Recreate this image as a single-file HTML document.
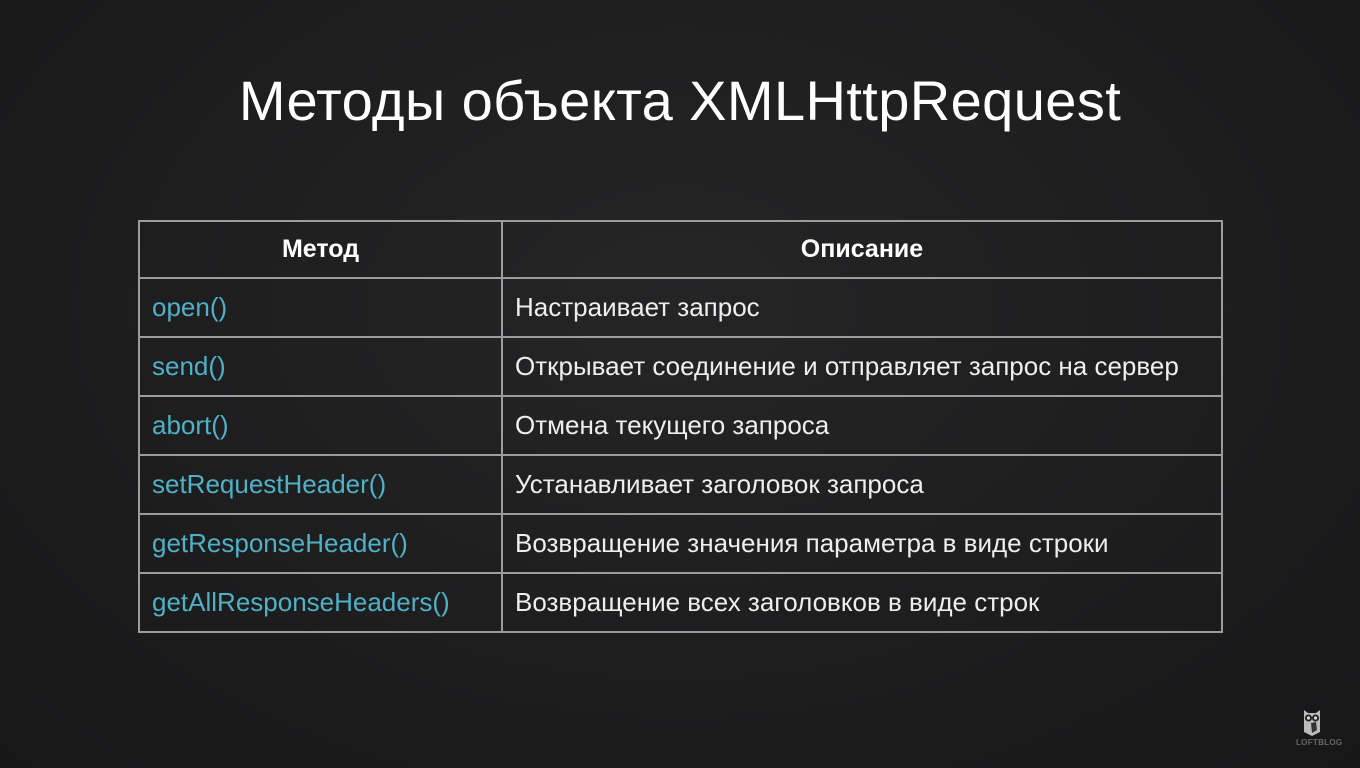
<!DOCTYPE html>
<html><head><meta charset="utf-8"><style>
html,body{margin:0;padding:0}
body{width:1360px;height:768px;overflow:hidden;background:radial-gradient(ellipse at 50% 40%,#252526 0%,#1d1d1e 60%,#171718 100%);font-family:"Liberation Sans",sans-serif;position:relative;color:#fff}
h1{position:absolute;left:0;width:1360px;top:68px;margin:0;text-align:center;font-weight:normal;font-size:56px;color:#fff;letter-spacing:0.4px}
table{position:absolute;left:138px;top:220px;border-collapse:collapse;width:1085px}
td,th{border:2px solid #9c9c9c;height:59px;padding:0 0 0 12px;font-size:26px;text-align:left;color:#eee;box-sizing:border-box}
th{text-align:center;font-weight:bold;padding:0;color:#fff;height:57px;font-size:25px}
td.m{color:#4fb0c6;width:363px}
.logo{position:absolute;left:1302px;top:708px}
.lt{position:absolute;left:1296px;top:738px;font-size:8px;font-weight:bold;color:#666;letter-spacing:0.3px}
</style></head><body>
<h1>Методы объекта XMLHttpRequest</h1>
<table>
<tr><th style="width:363px">Метод</th><th>Описание</th></tr>
<tr><td class="m">open()</td><td>Настраивает запрос</td></tr>
<tr><td class="m">send()</td><td>Открывает соединение и отправляет запрос на сервер</td></tr>
<tr><td class="m">abort()</td><td>Отмена текущего запроса</td></tr>
<tr><td class="m">setRequestHeader()</td><td>Устанавливает заголовок запроса</td></tr>
<tr><td class="m">getResponseHeader()</td><td>Возвращение значения параметра в виде строки</td></tr>
<tr><td class="m">getAllResponseHeaders()</td><td>Возвращение всех заголовков в виде строк</td></tr>
</table>
<svg class="logo" width="20" height="28" viewBox="0 0 20 28">
<path d="M2 2 L6 5 L14 5 L18 2 L18 24 L10 28 L2 24 Z" fill="#bbb"/>
<circle cx="6.5" cy="10" r="3.5" fill="#222"/><circle cx="13.5" cy="10" r="3.5" fill="#222"/>
<circle cx="6.5" cy="10" r="1.6" fill="#ddd"/><circle cx="13.5" cy="10" r="1.6" fill="#ddd"/>
<path d="M9 15 L14 14 L15 22 L10 25 Z" fill="#333"/>
</svg>
<div class="lt">LOFTBLOG</div>
</body></html>
